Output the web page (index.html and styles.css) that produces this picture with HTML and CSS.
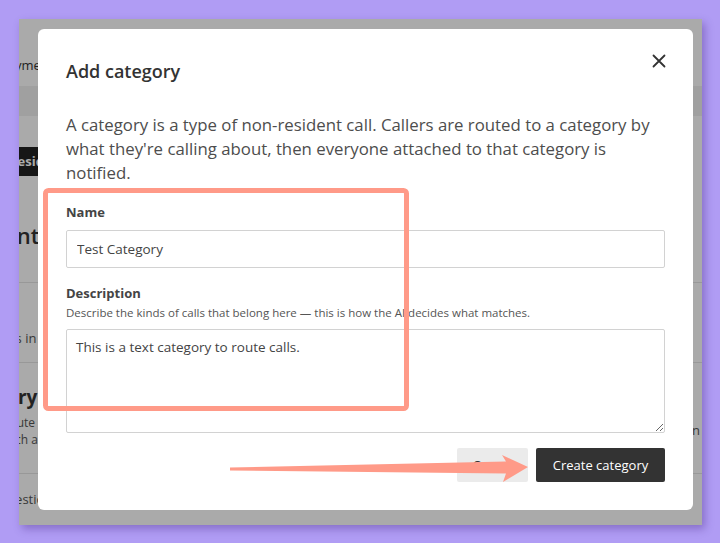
FILE: index.html
```html
<!DOCTYPE html>
<html lang="en">
<head>
  <meta charset="UTF-8" />
  <meta name="viewport" content="width=device-width, initial-scale=1.0"/>
  <title>Add category</title>
  <link rel="stylesheet" href="styles.css">
</head>
<body>
  <div class="window">
    <div class="page">
      <div class="topbar"><span class="crumb">Payments</span></div>
      <div class="nav"></div>
      <div class="tabs"><span class="tab">Resident</span></div>
      <h2 class="heading">Account</h2>
      <ul class="rows">
        <li class="row row-first"><p class="row-text">Callers in this list</p></li>
        <li class="row row-second">
          <h3 class="row-title">Delivery</h3>
          <p class="row-sub">Route<br>such a</p>
          <span class="row-side">Open</span>
        </li>
        <li class="row row-third"><p class="row-text">Questions</p></li>
      </ul>
    </div>
    <div class="overlay"></div>

    <div class="modal">
      <div class="modal-header">
        <h1 class="modal-title">Add category</h1>
        <button class="close" aria-label="Close">
          <svg width="14" height="14" viewBox="0 0 14 14">
            <path d="M1.5 1.5 L12.5 12.5 M12.5 1.5 L1.5 12.5" stroke="#333" stroke-width="1.8" stroke-linecap="round" fill="none"/>
          </svg>
        </button>
      </div>
      <p class="intro">A category is a type of non-resident call. Callers are routed to a category by what they're calling about, then everyone attached to that category is notified.</p>

      <label class="label label-name" for="name">Name</label>
      <input class="field" id="name" type="text" value="Test Category" />

      <label class="label label-desc" for="desc">Description</label>
      <p class="hint">Describe the kinds of calls that belong here — this is how the AI decides what matches.</p>
      <textarea class="field area" id="desc">This is a text category to route calls.</textarea>

      <div class="actions">
        <button class="btn btn-cancel">Cancel</button>
        <button class="btn btn-primary">Create category</button>
      </div>
    </div>
  </div>

  <svg class="marks" width="720" height="543" viewBox="0 0 720 543">
    <rect x="45.5" y="190.5" width="361" height="218" rx="3" fill="none" stroke="#ff9a88" stroke-width="5"/>
    <polygon points="230,467.5 506,461.5 502,455 528,467 503,482 506,473.5 230,470.5" fill="#ff9a88"/>
  </svg>
</body>
</html>
```

FILE: styles.css
```css
* {
  box-sizing: border-box;
}
body {
  margin: 0;
  background: #b09cf4;
  font-family: 'Open Sans', 'Noto Sans', sans-serif;
  width: 720px;
  height: 543px;
  overflow: hidden;
  position: relative;
}
.window {
  position: relative;
  margin: 19px 0 0 19px;
  width: 683px;
  height: 506px;
  background: #fff;
  overflow: hidden;
  box-shadow: 3px 4px 8px rgba(60, 30, 120, 0.35);
}

/* page behind the dialog */
.page {
  color: #333;
  font-size: 13px;
}
.topbar {
  height: 67px;
  padding: 36px 0 0 0;
}
.crumb {
  display: block;
  margin-left: -19px;
  line-height: 20px;
}
.nav {
  height: 30px;
  background: #f1f1f1;
}
.tabs {
  margin-top: 31px;
  height: 29px;
}
.tab {
  display: inline-block;
  margin-left: -22px;
  height: 29px;
  line-height: 29px;
  padding: 0 12px;
  background: #222;
  color: #fff;
  font-weight: 700;
}
.heading {
  margin: 44px 0 0 -66px;
  font-size: 22px;
  font-weight: 600;
  line-height: 30px;
  height: 62px;
}
.rows {
  list-style: none;
  margin: 0;
  padding: 0;
}
.row {
  position: relative;
  border-top: 1px solid #e4e4e4;
}
.row-first {
  height: 80px;
  padding-top: 46px;
}
.row-second {
  height: 111px;
  padding-top: 21px;
}
.row-third {
  height: 60px;
  padding-top: 16px;
}
.row-text {
  margin: 0 0 0 -38px;
  line-height: 18px;
  color: #555;
}
.row-third .row-text {
  margin-left: -22px;
}
.row-title {
  margin: 0 0 0 -60px;
  font-size: 19px;
  font-weight: 700;
  line-height: 26px;
}
.row-sub {
  margin: 4px 0 0 -17px;
  font-size: 12px;
  line-height: 17px;
  color: #555;
}
.row-side {
  position: absolute;
  right: 2px;
  top: 58px;
  color: #555;
}
.overlay {
  position: absolute;
  inset: 0;
  background: rgba(0, 0, 0, 0.333);
}

/* dialog */
.modal {
  position: absolute;
  left: 19px;
  top: 10px;
  width: 655px;
  height: 481px;
  background: #fff;
  border-radius: 6px;
  padding: 30px 28px 28px;
  color: #444;
}
.modal-header {
  display: flex;
  justify-content: space-between;
  align-items: flex-start;
}
.modal-title {
  margin: 0;
  font-size: 18px;
  font-weight: 600;
  line-height: 24px;
  color: #333;
}
.close {
  border: none;
  background: none;
  padding: 0;
  margin: -5px -1px 0 0;
  width: 14px;
  height: 14px;
  cursor: pointer;
}
.close svg {
  display: block;
}
.intro {
  margin: 30px 0 0;
  font-size: 16.8px;
  line-height: 24px;
  color: #4d4d4d;
}
.label {
  display: block;
  font-size: 13px;
  font-weight: 700;
  line-height: 18px;
  color: #444;
}
.label-name {
  margin-top: 18px;
}
.label-desc {
  margin-top: 16px;
}
.field {
  display: block;
  width: 100%;
  margin-top: 9px;
  height: 38px;
  border: 1px solid #d2d2d2;
  border-radius: 2px;
  padding: 0 10px;
  font-family: inherit;
  font-size: 13.5px;
  color: #444;
  background: #fff;
}
.hint {
  margin: 3px 0 0;
  font-size: 11.5px;
  line-height: 16px;
  color: #555;
}
.area {
  margin-top: 8px;
  height: 104px;
  padding: 7px 9px;
  line-height: 20px;
  resize: vertical;
}
.actions {
  display: flex;
  justify-content: flex-end;
  gap: 8px;
  margin-top: 15px;
}
.btn {
  height: 34px;
  border: none;
  border-radius: 2px;
  font-family: inherit;
  font-size: 13px;
  padding: 0 14px;
  cursor: pointer;
}
.btn-cancel {
  width: 71px;
  background: #ebebeb;
  color: #333;
}
.btn-primary {
  width: 129px;
  background: #333;
  color: #fff;
}
.marks {
  position: absolute;
  left: 0;
  top: 0;
  pointer-events: none;
}
```
